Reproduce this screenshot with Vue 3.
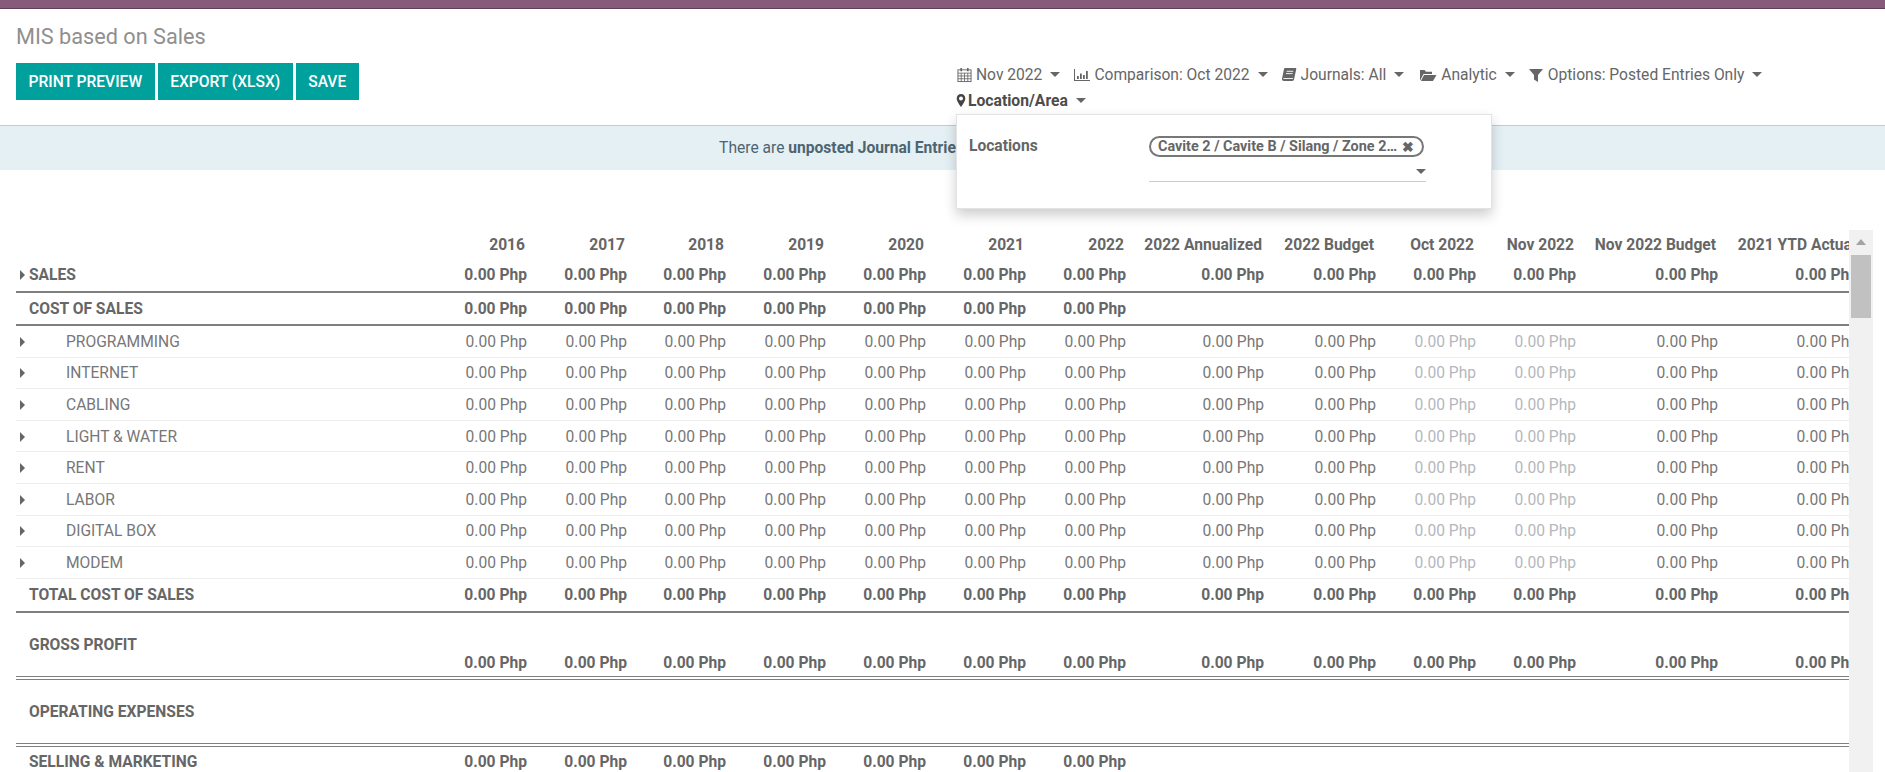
<script setup>
const years = ['2016', '2017', '2018', '2019', '2020', '2021', '2022', '2022 Annualized', '2022 Budget', 'Oct 2022', 'Nov 2022', 'Nov 2022 Budget', '2021 YTD Actual'];
const zero = '0.00 Php';

const details = ['PROGRAMMING', 'INTERNET', 'CABLING', 'LIGHT & WATER', 'RENT', 'LABOR', 'DIGITAL BOX', 'MODEM'];
const dimmed = [9, 10];
</script>

<template>
    <div class="page">
        <div class="topbar"></div>

        <div class="control-panel">
            <div class="left-side">
                <h1 class="title">MIS based on Sales</h1>
                <div class="buttons">
                    <button class="btn">Print Preview</button>
                    <button class="btn">Export (XLSX)</button>
                    <button class="btn">Save</button>
                </div>
            </div>

            <div class="filters">
                <div class="filter">
                    <svg class="icon" width="15" height="16" viewBox="0 0 16 16" fill="none" stroke="#666" stroke-width="1">
                        <rect x="1" y="2.5" width="14" height="12.5" />
                        <path d="M1 6h14M1 9h14M1 12h14M4.5 6v9M8 6v9M11.5 6v9" stroke-width=".9" />
                        <path d="M4.5 .5v3.5M11.5 .5v3.5" stroke-width="1.8" />
                    </svg>
                    <span>Nov 2022</span><i class="caret"></i>
                </div>
                <div class="filter">
                    <svg class="icon" width="17" height="16" viewBox="0 0 17 16" fill="#666">
                        <path d="M1 2h1v11h15v1H1z" />
                        <path d="M4 9h1.8v3H4zM7 6.5h1.8V12H7zM10 8h1.8v4H10zM13 4h1.8v8H13z" />
                    </svg>
                    <span>Comparison: Oct 2022</span><i class="caret"></i>
                </div>
                <div class="filter">
                    <svg class="icon" width="16" height="16" viewBox="0 0 16 16">
                        <path fill="#666" d="M4 1h10.5c.6 0 1 .5.8 1L13 12.6c-.2.8-.7 1.4-1.6 1.4H2.8C1.6 14 .8 13 1 11.8L3 2c.1-.6.5-1 1-1z" />
                        <path fill="none" stroke="#fff" stroke-width=".9" d="M5.6 4.3h6.6M5 6.6h6.6M2.4 11.5h9.6" />
                    </svg>
                    <span>Journals: All</span><i class="caret"></i>
                </div>
                <div class="filter analytic">
                    <svg class="icon" width="18" height="16" viewBox="0 0 18 16" fill="#666">
                        <path d="M1 13V3h4.5L7 4.7h6V7H4.5L1.4 13z" />
                        <path d="M5 8h12.5L14 14H1.9z" />
                    </svg>
                    <span>Analytic</span><i class="caret"></i>
                </div>
                <div class="filter">
                    <svg class="icon" width="16" height="16" viewBox="0 0 16 16" fill="#666">
                        <path d="M1 2h14L10 8v7l-4-2.5V8z" />
                    </svg>
                    <span>Options: Posted Entries Only</span><i class="caret"></i>
                </div>
                <div class="filter open">
                    <svg class="icon pin" width="10" height="15" viewBox="0 0 10 15" fill="#444">
                        <path fill-rule="evenodd" d="M5 1C2.5 1 .7 3 .7 5.4c0 2.6 3 6.5 4.3 8.6 1.3-2.1 4.3-6 4.3-8.6C9.3 3 7.5 1 5 1zm0 6.4a2 2 0 110-4 2 2 0 010 4z" />
                    </svg>
                    <span>Location/Area</span><i class="caret"></i>

                    <div class="popover">
                        <div class="popover-label">Locations</div>
                        <div class="popover-field">
                            <div class="chip">
                                <span class="chip-text">Cavite 2 / Cavite B / Silang / Zone 2…</span>
                                <span class="chip-x">✖</span>
                            </div>
                            <div class="select-line"><i class="caret"></i></div>
                        </div>
                    </div>
                </div>
            </div>
        </div>

        <div class="alert">There are <b>unposted Journal Entries</b> prior or included in this period.</div>

        <div class="report">
            <div class="table-wrap">
                <div class="row head">
                    <div></div>
                    <div v-for="y in years" :key="y" class="cell">{{ y }}</div>
                </div>

                <div class="row strong border2 h34">
                    <div class="label"><i class="arrow"></i><span class="tight">SALES</span></div>
                    <div v-for="y in years" :key="y" class="cell">{{ zero }}</div>
                </div>

                <div class="row strong border2 h33">
                    <div class="label"><span class="name">COST OF SALES</span></div>
                    <div v-for="(y, i) in years" :key="y" class="cell">{{ i < 7 ? zero : '' }}</div>
                </div>

                <div v-for="d in details" :key="d" class="row detail">
                    <div class="label"><i class="arrow"></i><span class="indent">{{ d }}</span></div>
                    <div v-for="(y, i) in years" :key="y" class="cell" :class="{ dim: dimmed.includes(i) }">{{ zero }}</div>
                </div>

                <div class="row strong border2 h34">
                    <div class="label"><span class="name">TOTAL COST OF SALES</span></div>
                    <div v-for="y in years" :key="y" class="cell">{{ zero }}</div>
                </div>

                <div class="row strong double gross">
                    <div class="label"><span class="name">GROSS PROFIT</span></div>
                    <div v-for="y in years" :key="y" class="cell">{{ zero }}</div>
                </div>

                <div class="row strong double opex">
                    <div class="label"><span class="name">OPERATING EXPENSES</span></div>
                </div>

                <div class="row strong h30">
                    <div class="label"><span class="name">SELLING &amp; MARKETING</span></div>
                    <div v-for="(y, i) in years" :key="y" class="cell">{{ i < 7 ? zero : '' }}</div>
                </div>
            </div>

            <div class="scrollbar">
                <i class="scroll-up"></i>
                <div class="thumb"></div>
            </div>
        </div>
    </div>
</template>

<style>
html, body {
    margin: 0;
    overflow: hidden;
}
</style>

<style scoped>
.page {
    height: 772px;
    overflow: hidden;
    background: #fff;
    font-family: Roboto, "Liberation Sans", sans-serif;
    font-size: 15.6px;
    color: #666;
}

.topbar {
    height: 8px;
    background: #875a7b;
    border-bottom: 1px solid #5f4157;
}

.control-panel {
    display: flex;
    height: 116px;
    border-bottom: 1px solid #c8c8c8;
}

.left-side {
    width: 957px;
    padding-left: 16px;
    box-sizing: border-box;
}

.title {
    margin: 16px 0 0;
    height: 38px;
    font-size: 21.7px;
    font-weight: 400;
    line-height: 24px;
    color: #8f8f8f;
}

.buttons {
    display: flex;
    gap: 3px;
}

.btn {
    height: 37px;
    padding: 0 12.5px;
    border: none;
    background: #00a09d;
    color: #fff;
    font-family: inherit;
    font-size: 15.6px;
    font-weight: 500;
    text-transform: uppercase;
}

.filters {
    display: flex;
    flex-wrap: wrap;
    align-content: flex-start;
    width: 850px;
    padding-top: 55px;
    row-gap: 5px;
}

.filter {
    display: flex;
    align-items: center;
    height: 21px;
    margin-right: 13px;
    white-space: nowrap;
}

.filter.analytic {
    margin-left: 2px;
}

.icon {
    margin-right: 4px;
}

.icon.pin {
    margin-right: 2px;
    margin-left: -1px;
}

.caret {
    display: inline-block;
    width: 0;
    height: 0;
    margin-left: 8px;
    border-left: 5px solid transparent;
    border-right: 5px solid transparent;
    border-top: 5px solid #666;
}

.filter.open {
    position: relative;
    font-weight: 700;
    font-size: 15.7px;
    color: #4c4c4c;
}

.popover {
    position: absolute;
    left: -1px;
    top: 24px;
    z-index: 5;
    display: flex;
    box-sizing: border-box;
    width: 536px;
    height: 95px;
    padding: 21px 12px;
    background: #fff;
    border: 1px solid #e3e3e3;
    box-shadow: 0 6px 12px rgba(0, 0, 0, .2);
    font-size: 15.6px;
    color: #666;
}

.popover-label {
    width: 180px;
    font-weight: 700;
    line-height: 20px;
}

.popover-field {
    width: 277px;
}

.chip {
    display: flex;
    align-items: center;
    box-sizing: border-box;
    width: 275px;
    height: 21px;
    padding: 0 8px 0 7px;
    border: 2px solid #777;
    border-radius: 11px;
    font-size: 14.4px;
    font-weight: 700;
}

.chip-text {
    flex: 1;
    white-space: nowrap;
    overflow: hidden;
}

.chip-x {
    font-size: 14px;
}

.select-line {
    display: flex;
    justify-content: flex-end;
    align-items: center;
    height: 20px;
    border-bottom: 1px solid #ccc;
    padding: 4px 0 0;
}

.alert {
    height: 44px;
    padding-left: 12px;
    line-height: 44px;
    background: #e5f0f5;
    text-align: center;
    color: #4d6570;
}

.alert b {
    font-weight: 700;
}

.report {
    display: flex;
    margin-top: 60px;
    padding-left: 16px;
    padding-right: 12px;
}

.table-wrap {
    flex: 1;
    min-width: 0;
    overflow: hidden;
}

.row {
    display: grid;
    grid-template-columns: 411px 100px 100px 99px 100px 100px 100px 100px 138px 112px 100px 100px 142px 140px;
    align-items: center;
    box-sizing: border-box;
    width: 1842px;
    white-space: nowrap;
}

.head {
    height: 29px;
    font-weight: 700;
    color: #666;
}

.head .cell {
    padding-right: 2px;
    color: #666;
}

.cell {
    text-align: right;
    color: #777;
}

.strong {
    font-weight: 700;
}

.strong .label,
.strong .cell {
    color: #666;
}

.detail {
    height: 31.6px;
    padding-top: 1px;
    border-bottom: 1px solid #eee;
}

.detail .label {
    color: #777;
}

.dim,
.detail .cell.dim {
    color: #b4b8bc;
}

.label {
    display: flex;
    align-items: center;
}

.arrow {
    display: inline-block;
    width: 0;
    height: 0;
    margin-left: 4px;
    border-top: 5px solid transparent;
    border-bottom: 5px solid transparent;
    border-left: 5px solid #666;
}

.tight {
    margin-left: 4px;
}

.name {
    margin-left: 13px;
}

.indent {
    margin-left: 41px;
}

.border2 {
    border-bottom: 2px solid #7f7f7f;
}

.h34 {
    height: 34px;
}

.h33 {
    height: 33px;
}

.h30 {
    height: 30px;
}

.double {
    border-bottom: 4px double #7f7f7f;
}

.gross {
    height: 67px;
    align-items: end;
    padding-bottom: 4px;
}

.gross .label {
    align-self: start;
    padding-top: 23px;
}

.opex {
    height: 67px;
    padding-top: 1px;
}

.scrollbar {
    position: relative;
    flex: none;
    width: 24px;
    height: 542px;
    background: #f1f1f1;
}

.scroll-up {
    display: block;
    width: 0;
    height: 0;
    margin: 9px auto 0;
    border-left: 5px solid transparent;
    border-right: 5px solid transparent;
    border-bottom: 6px solid #a3a3a3;
}

.thumb {
    margin: 10px 2px 0;
    height: 63px;
    background: #c1c1c1;
}
</style>
